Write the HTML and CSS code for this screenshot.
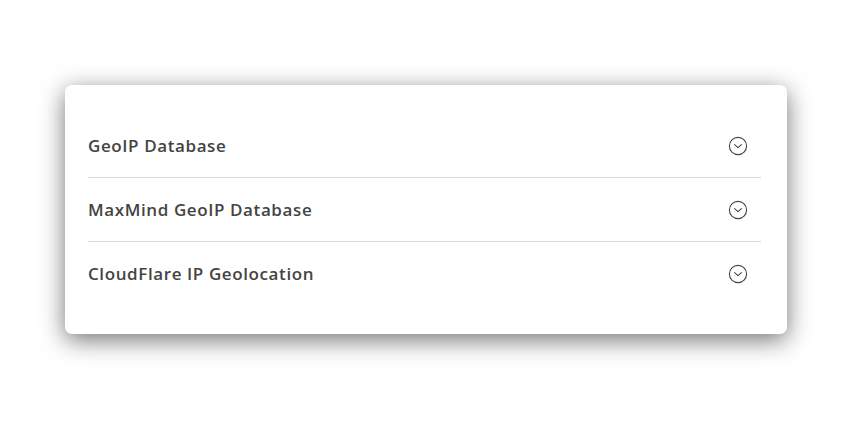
FILE: index.html
```html
<!DOCTYPE html>
<html>
<head>
<meta charset="utf-8">
<link rel="stylesheet" href="styles.css">
</head>
<body>
<div class="page">
  <div class="card">
    <div class="row">
      <span class="title">GeoIP Database</span>
      <svg class="icon" viewBox="0 0 20 20"><circle cx="10" cy="10" r="8.6"/><path d="M6.6 8.7 L10 11.6 L13.4 8.7"/></svg>
    </div>
    <div class="row">
      <span class="title">MaxMind GeoIP Database</span>
      <svg class="icon" viewBox="0 0 20 20"><circle cx="10" cy="10" r="8.6"/><path d="M6.6 8.7 L10 11.6 L13.4 8.7"/></svg>
    </div>
    <div class="row">
      <span class="title">CloudFlare IP Geolocation</span>
      <svg class="icon" viewBox="0 0 20 20"><circle cx="10" cy="10" r="8.6"/><path d="M6.6 8.7 L10 11.6 L13.4 8.7"/></svg>
    </div>
  </div>
</div>
</body>
</html>
```
FILE: styles.css
```css
html, body {
  margin: 0;
  padding: 0;
  background: #fff;
  min-height: 425px;
}
.page {
  padding: 85px 66px 0 65px;
}
.card {
  width: 722px;
  box-sizing: border-box;
  background: #fff;
  border-radius: 7px;
  box-shadow: 0 6px 24px rgba(0, 0, 0, 0.55);
  padding: 29px 26px 29px 23px;
}
.row {
  height: 64px;
  box-sizing: border-box;
  display: flex;
  align-items: center;
  justify-content: space-between;
  border-bottom: 1px solid #d9d9d9;
  padding-right: 13px;
}
.row:last-child {
  border-bottom: none;
  height: 63px;
}
.title {
  font-family: "Open Sans", sans-serif;
  font-weight: 600;
  font-size: 17px;
  color: #444;
  letter-spacing: 0.6px;
}
.icon {
  width: 20px;
  height: 20px;
  fill: none;
  stroke: #444;
  stroke-width: 1.1;
  stroke-linecap: round;
  stroke-linejoin: round;
}
```
